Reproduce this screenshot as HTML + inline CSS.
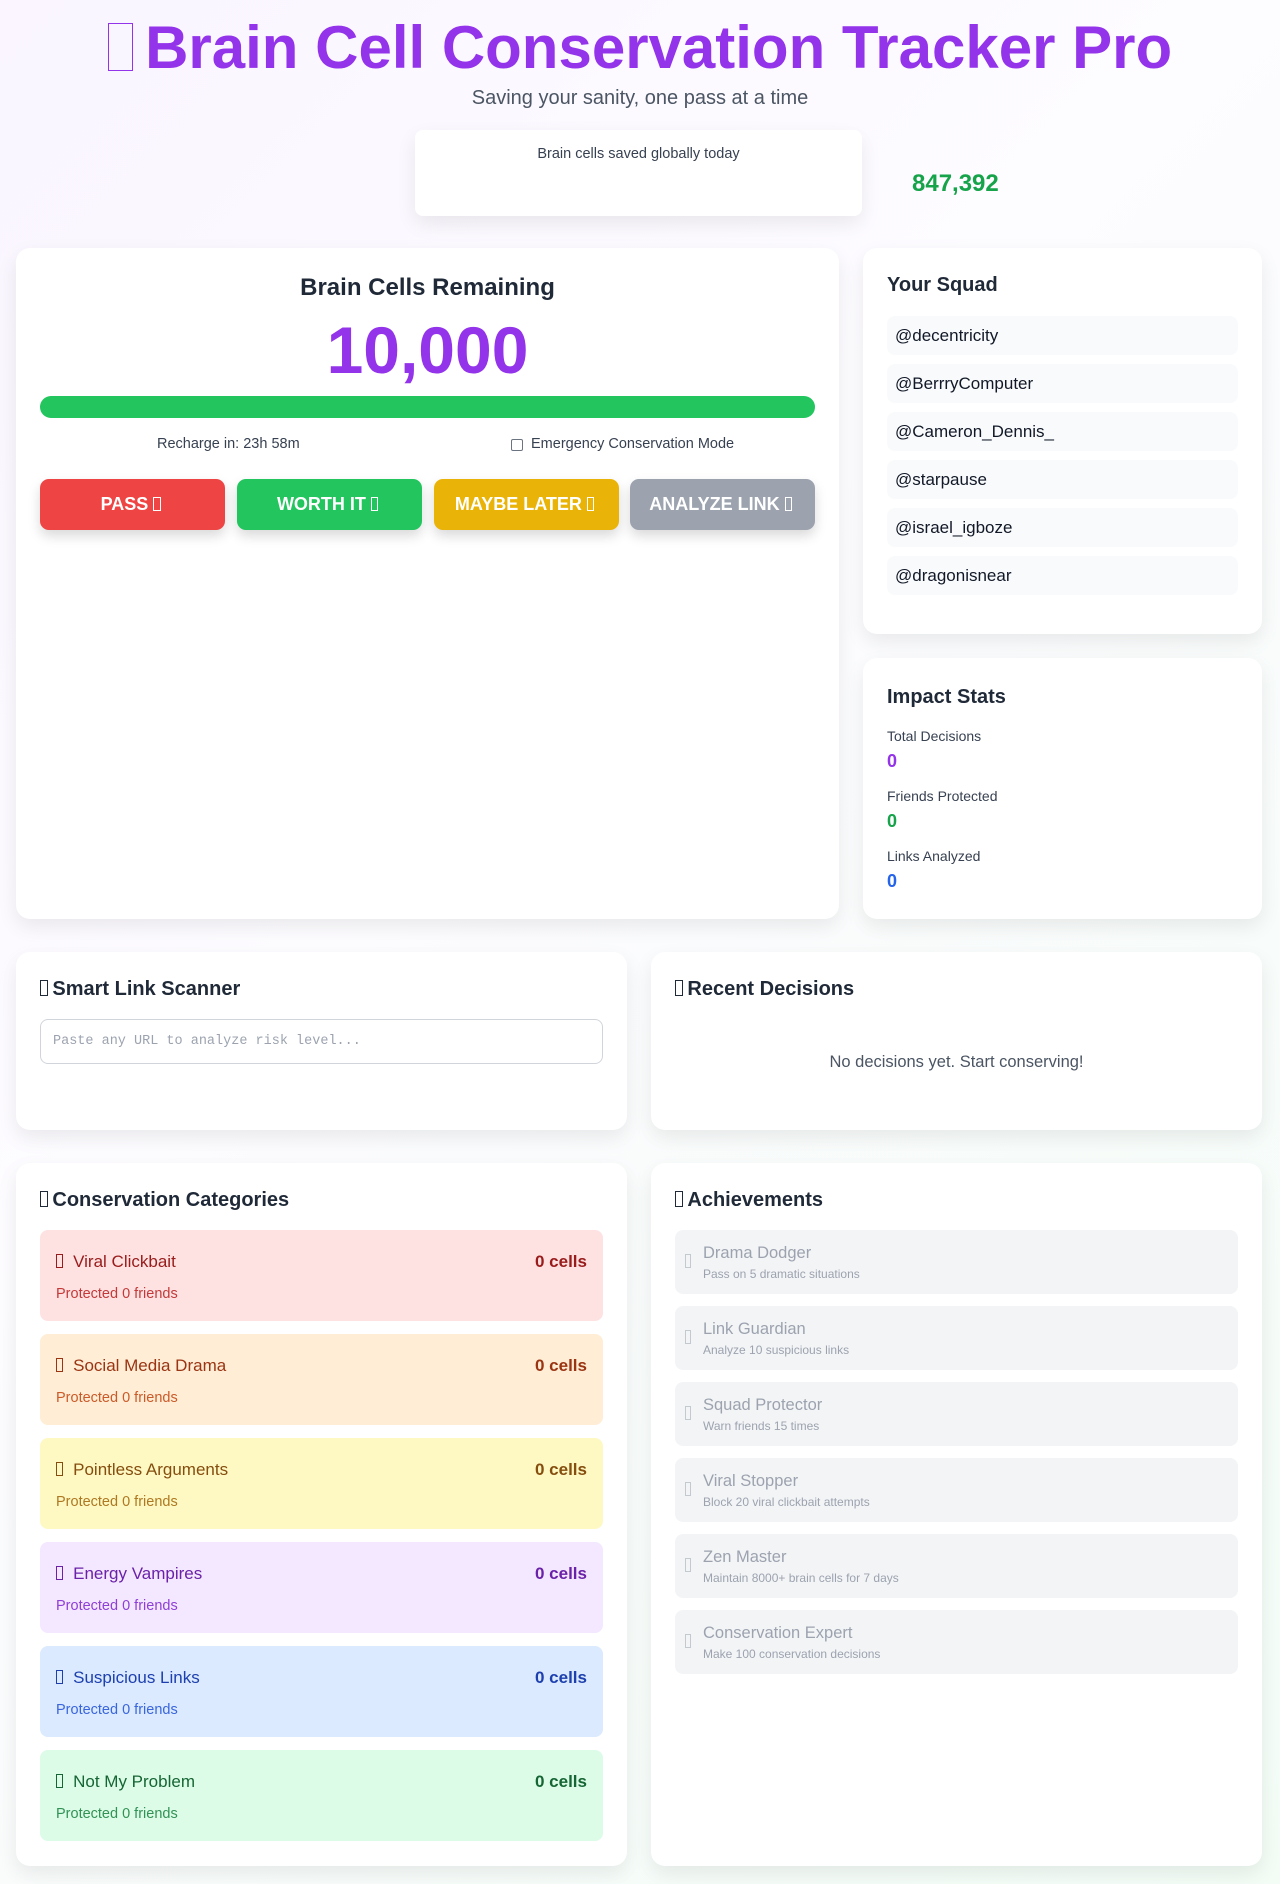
<!DOCTYPE html>
<html><head><meta charset="utf-8"><style>
*{box-sizing:border-box;margin:0;padding:0}
body{width:1280px;height:1884px;font-family:"Liberation Sans",sans-serif;background:linear-gradient(135deg,#faf5ff 0%,#fdfcff 40%,#f3fdf6 100%);position:relative;color:#1f2937;overflow:hidden}
.abs{position:absolute}
.card{position:absolute;background:#fff;border-radius:14px;box-shadow:0 8px 20px rgba(0,0,0,.08)}
.tofu{display:inline-block;width:.42em;height:.8em;border:2px solid currentColor;vertical-align:-0.05em;margin-right:.2em}
.tofu.s{border-width:1px}
h1{position:absolute;left:0;width:1280px;top:13px;text-align:center;font-size:60px;font-weight:700;color:#9333ea}
.sub{position:absolute;left:0;width:1280px;top:87px;text-align:center;font-size:20px;color:#4b5563}
h3{font-size:20px;font-weight:700;color:#1f2937}
.btn{position:absolute;top:479px;width:185px;height:51px;border-radius:9px;color:#fff;font-weight:700;font-size:18px;text-align:center;line-height:51px;box-shadow:0 6px 12px rgba(0,0,0,.15)}
.sq{position:absolute;left:887px;width:351px;height:39px;background:#f9fafb;border-radius:8px;font-size:17px;line-height:39px;padding-left:8px;color:#111827}
.lab{position:absolute;left:887px;font-size:14px;color:#374151}
.val{position:absolute;left:887px;font-size:18px;font-weight:700}
.cat{position:absolute;left:40px;width:563px;height:91px;border-radius:8px;padding:0 16px}
.cat .n{position:absolute;left:16px;top:22px;font-size:17px}
.cat .c{position:absolute;right:16px;top:22px;font-size:17px;font-weight:700}
.cat .p{position:absolute;left:16px;top:56px;font-size:14.5px;opacity:.85}
.ach{position:absolute;left:675px;width:563px;height:64px;border-radius:8px;background:#f3f4f6;color:#9ca3af}
.ach .t{position:absolute;left:28px;top:14px;font-size:16.5px}
.ach .d{position:absolute;left:28px;top:37px;font-size:12px}
.ach .i{position:absolute;left:10px;top:24px;width:6px;height:14px;border:1px solid #c4c8cf}
</style></head><body>
<h1><span class="tofu" style="border-width:1.5px"></span>Brain Cell Conservation Tracker Pro</h1>
<div class="sub">Saving your sanity, one pass at a time</div>
<div class="card" style="left:415px;top:130px;width:447px;height:86px;border-radius:8px"><div style="text-align:center;margin-top:16px;font-size:14.5px;color:#374151">Brain cells saved globally today</div></div>
<div class="abs" style="left:912px;top:170px;font-size:24px;font-weight:700;color:#16a34a">847,392</div>

<div class="card" style="left:16px;top:248px;width:823px;height:671px"></div>
<div class="abs" style="left:40px;width:775px;top:274px;text-align:center;font-size:24px;font-weight:700">Brain Cells Remaining</div>
<div class="abs" style="left:40px;width:775px;top:312px;text-align:center;font-size:66px;font-weight:700;color:#9333ea">10,000</div>
<div class="abs" style="left:40px;top:396px;width:775px;height:22px;border-radius:11px;background:#22c55e"></div>
<div class="abs" style="left:157px;top:436px;font-size:14.5px;color:#374151">Recharge in: 23h 58m</div>
<div class="abs" style="left:511px;top:439px;width:12px;height:12px;border:1px solid #6b7280;border-radius:2px"></div>
<div class="abs" style="left:531px;top:436px;font-size:14.5px;color:#374151">Emergency Conservation Mode</div>
<div class="btn" style="left:40px;background:#ef4444">PASS <span class="tofu s"></span></div>
<div class="btn" style="left:237px;background:#22c55e">WORTH IT <span class="tofu s"></span></div>
<div class="btn" style="left:434px;background:#eab308">MAYBE LATER <span class="tofu s"></span></div>
<div class="btn" style="left:630px;background:#9ca3af">ANALYZE LINK <span class="tofu s"></span></div>

<div class="card" style="left:863px;top:248px;width:399px;height:386px"></div>
<h3 class="abs" style="left:887px;top:274px">Your Squad</h3>
<div class="sq" style="top:316px">@decentricity</div>
<div class="sq" style="top:364px">@BerrryComputer</div>
<div class="sq" style="top:412px">@Cameron_Dennis_</div>
<div class="sq" style="top:460px">@starpause</div>
<div class="sq" style="top:508px">@israel_igboze</div>
<div class="sq" style="top:556px">@dragonisnear</div>

<div class="card" style="left:863px;top:658px;width:399px;height:261px"></div>
<h3 class="abs" style="left:887px;top:686px">Impact Stats</h3>
<div class="lab" style="top:728px">Total Decisions</div><div class="val" style="top:751px;color:#9333ea">0</div>
<div class="lab" style="top:788px">Friends Protected</div><div class="val" style="top:811px;color:#16a34a">0</div>
<div class="lab" style="top:848px">Links Analyzed</div><div class="val" style="top:871px;color:#2563eb">0</div>

<div class="card" style="left:16px;top:952px;width:611px;height:178px"></div>
<h3 class="abs" style="left:40px;top:978px"><span class="tofu s"></span>Smart Link Scanner</h3>
<div class="abs" style="left:40px;top:1019px;width:563px;height:45px;border:1px solid #d1d5db;border-radius:8px;font-family:'Liberation Mono',monospace;font-size:13.5px;color:#9ca3af;line-height:43px;padding-left:12px">Paste any URL to analyze risk level...</div>

<div class="card" style="left:651px;top:952px;width:611px;height:178px"></div>
<h3 class="abs" style="left:675px;top:978px"><span class="tofu s"></span>Recent Decisions</h3>
<div class="abs" style="left:651px;width:611px;top:1053px;text-align:center;font-size:16.5px;color:#4b5563">No decisions yet. Start conserving!</div>

<div class="card" style="left:16px;top:1163px;width:611px;height:703px"></div>
<h3 class="abs" style="left:40px;top:1189px"><span class="tofu s"></span>Conservation Categories</h3>
<div class="cat" style="top:1230px;background:#fee2e2;color:#991b1b"><span class="n"><span class="tofu s" style="margin-right:10px"></span>Viral Clickbait</span><span class="c">0 cells</span><span class="p" style="color:#b91c1c">Protected 0 friends</span></div>
<div class="cat" style="top:1334px;background:#ffedd5;color:#9a3412"><span class="n"><span class="tofu s" style="margin-right:10px"></span>Social Media Drama</span><span class="c">0 cells</span><span class="p" style="color:#c2410c">Protected 0 friends</span></div>
<div class="cat" style="top:1438px;background:#fef9c3;color:#854d0e"><span class="n"><span class="tofu s" style="margin-right:10px"></span>Pointless Arguments</span><span class="c">0 cells</span><span class="p" style="color:#a16207">Protected 0 friends</span></div>
<div class="cat" style="top:1542px;background:#f3e8ff;color:#6b21a8"><span class="n"><span class="tofu s" style="margin-right:10px"></span>Energy Vampires</span><span class="c">0 cells</span><span class="p" style="color:#7e22ce">Protected 0 friends</span></div>
<div class="cat" style="top:1646px;background:#dbeafe;color:#1e40af"><span class="n"><span class="tofu s" style="margin-right:10px"></span>Suspicious Links</span><span class="c">0 cells</span><span class="p" style="color:#1d4ed8">Protected 0 friends</span></div>
<div class="cat" style="top:1750px;background:#dcfce7;color:#166534"><span class="n"><span class="tofu s" style="margin-right:10px"></span>Not My Problem</span><span class="c">0 cells</span><span class="p" style="color:#15803d">Protected 0 friends</span></div>

<div class="card" style="left:651px;top:1163px;width:611px;height:703px"></div>
<h3 class="abs" style="left:675px;top:1189px"><span class="tofu s"></span>Achievements</h3>
<div class="ach" style="top:1230px"><span class="i"></span><span class="t">Drama Dodger</span><span class="d">Pass on 5 dramatic situations</span></div>
<div class="ach" style="top:1306px"><span class="i"></span><span class="t">Link Guardian</span><span class="d">Analyze 10 suspicious links</span></div>
<div class="ach" style="top:1382px"><span class="i"></span><span class="t">Squad Protector</span><span class="d">Warn friends 15 times</span></div>
<div class="ach" style="top:1458px"><span class="i"></span><span class="t">Viral Stopper</span><span class="d">Block 20 viral clickbait attempts</span></div>
<div class="ach" style="top:1534px"><span class="i"></span><span class="t">Zen Master</span><span class="d">Maintain 8000+ brain cells for 7 days</span></div>
<div class="ach" style="top:1610px"><span class="i"></span><span class="t">Conservation Expert</span><span class="d">Make 100 conservation decisions</span></div>
</body></html>
